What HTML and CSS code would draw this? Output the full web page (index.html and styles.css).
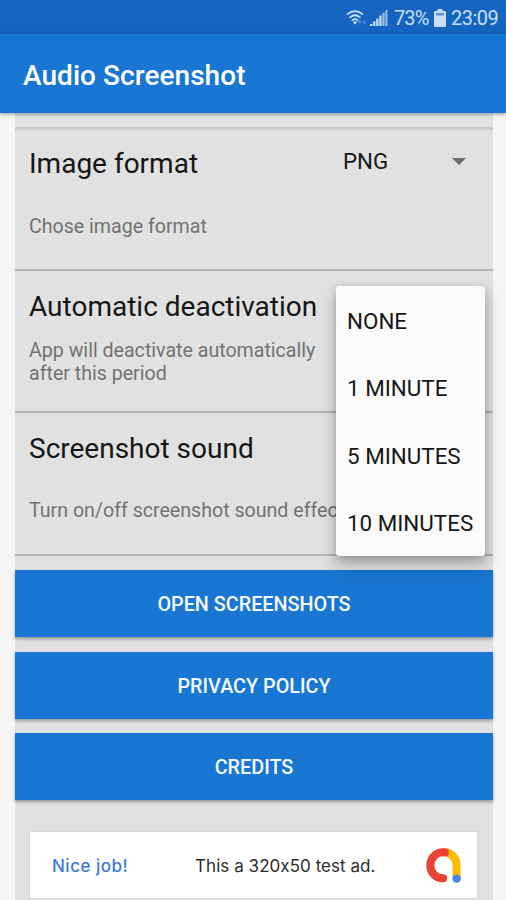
FILE: index.html
```html
<!DOCTYPE html>
<html lang="en">
<head>
<meta charset="utf-8">
<title>Audio Screenshot</title>
<link rel="stylesheet" href="styles.css">
</head>
<body>
<div class="screen">
  <div class="status">
    <svg class="wifi" viewBox="0 0 22 18" width="22" height="18" fill="none" stroke="currentColor" stroke-width="1.7" stroke-linecap="round">
      <path d="M1.5 5.2Q9 -.9 16.5 5.2M4 8.3Q9 4.2 14 8.3M6.4 11.2Q9 9.1 11.6 11.2"/>
      <path d="M6.9 12.9Q9 11.5 11.1 12.9L9 15.5z" fill="currentColor" stroke="none"/>
      <path d="M13.8 15V12M12.5 13.3l1.3-1.4 1.3 1.4M18.5 11.5v3M17.2 13.4l1.3 1.4 1.3-1.4" stroke-width="1" opacity=".35"/>
    </svg>
    <svg class="signal" viewBox="0 0 18 18" width="18" height="18" fill="currentColor">
      <path d="M0 15h2.3v2H0zM3.1 12.5h2.3V17H3.1zM6.2 9.5h2.3V17H6.2zM9.3 6.5h2.3V17H9.3z"/>
      <path d="M12.4 3.7h2.2V17h-2.2zM15.4 1h2v16h-2z" opacity=".75"/>
    </svg>
    <span class="percent">73%</span>
    <svg class="battery" viewBox="0 0 12 18" width="12" height="18">
      <path d="M3.5 0h5v2H11q1 0 1 1v14q0 1-1 1H1q-1 0-1-1V3q0-1 1-1h2.5z" fill="currentColor"/>
      <path d="M2 4h8v2.5H2z" fill="#5a93da"/>
    </svg>
    <span class="clock">23:09</span>
  </div>
  <header class="appbar"><h1>Audio Screenshot</h1></header>
  <main class="panel">
    <section class="row">
      <div>
        <h2>Image format</h2>
        <p>Chose image format</p>
      </div>
      <div class="spinner"><span>PNG</span><i class="caret"></i></div>
    </section>
    <section class="row tight">
      <div>
        <h2>Automatic deactivation</h2>
        <p>App will deactivate automatically<br>after this period</p>
      </div>
      <ul class="menu">
        <li>NONE</li>
        <li>1 MINUTE</li>
        <li>5 MINUTES</li>
        <li>10 MINUTES</li>
      </ul>
    </section>
    <section class="row">
      <div>
        <h2>Screenshot sound</h2>
        <p>Turn on/off screenshot sound effect</p>
      </div>
    </section>
    <div class="buttons">
      <button><span>OPEN SCREENSHOTS</span></button>
      <button><span>PRIVACY POLICY</span></button>
      <button><span>CREDITS</span></button>
    </div>
    <div class="ad">
      <span class="nice">Nice job!</span>
      <span class="test">This a 320x50 test ad.</span>
      <svg class="logo" viewBox="0 0 104 104" width="35" height="35" fill="none" stroke-width="24" stroke-linecap="round">
        <path d="M62 13C81 20 91 34 91 54V90" stroke="#fbbc04"/>
        <path d="M56 13C32 10 13 28 13 52C13 75 31 91 51 90" stroke="#ea4335"/>
        <circle cx="91" cy="91" r="12.5" fill="#4285f4"/>
      </svg>
    </div>
  </main>
</div>
</body>
</html>
```

FILE: styles.css
```css
* { box-sizing: border-box; margin: 0; padding: 0; }
body { background: #f5f5f5; font-family: Roboto, "Liberation Sans", sans-serif; }
.screen { width: 506px; height: 900px; overflow: hidden; display: flex; flex-direction: column; }
.status {
  height: 34px; flex: none; background: #1565c0; color: #c8e0fa;
  display: flex; align-items: center; padding: 2px 8px 0 0; justify-content: flex-end;
  font-size: 20px; line-height: 34px;
}
.wifi { margin-right: 2px; }
.signal { margin-right: 6px; }
.percent { width: 34px; margin-right: 6px; letter-spacing: -.9px; white-space: nowrap; }
.battery { margin-right: 5px; }
.clock { width: 47px; letter-spacing: -.5px; white-space: nowrap; }
.appbar {
  height: 79px; flex: none; background: #1976d2; color: #fff; padding-left: 23px;
  display: flex; align-items: center; position: relative; z-index: 1;
  box-shadow: 0 1px 4px rgba(0, 0, 0, .4);
}
h1 { font-size: 28px; font-weight: 500; line-height: 32px; padding-top: 5px; letter-spacing: .05px; }
.panel { width: 478px; margin-left: 15px; flex: 1; background: #e1e1e1; padding-top: 14px; }
.row {
  height: 142px; border-bottom: 2px solid #b5b5b5; padding: 20px 27px 0 14px;
  display: flex; justify-content: space-between; position: relative; white-space: nowrap;
}
.row:first-child { height: 144px; border-top: 3px solid #cacaca; padding-top: 18px; }
.row:first-child p { margin-top: 35px; }
.row:nth-child(3) { height: 143px; }
.row h2 { font-size: 28px; font-weight: 400; line-height: 32px; color: #161616; }
.row p { font-size: 19.6px; line-height: 23px; color: #737373; margin-top: 34px; }
.row.tight p { margin-top: 16px; }
.spinner { width: 123px; height: 26px; display: flex; justify-content: space-between; align-items: center; font-size: 22.3px; color: #161616; }
.caret { border: 7px solid transparent; border-top-color: #6d6d6d; border-bottom: 0; }
.menu {
  position: absolute; left: 321px; top: 15px; width: 149px; height: 270px; z-index: 2;
  list-style: none; background: #fafafa; border-radius: 3px; color: #161616;
  display: grid; grid-template-rows: repeat(4, 67.5px); align-items: center;
  padding: 1px 0 0 11px; font-size: 22.4px;
  box-shadow: 0 10px 20px rgba(0, 0, 0, .22), 0 3px 8px rgba(0, 0, 0, .2);
}
.buttons { padding-top: 14px; display: grid; grid-template-rows: repeat(3, 67px); gap: 14.5px; }
button { border: 0; background: #1976d2; color: #f4faff; font: 500 19.8px/24px Roboto, sans-serif; box-shadow: 0 2px 3px rgba(0, 0, 0, .33); padding-top: 3px; }
.ad {
  width: 449px; height: 68px; margin: 31px 0 0 14px; background: #fff; border: 1px solid #d6d6d6;
  display: flex; align-items: center; padding: 1px 16px 0 22px; font: 17px/24px Inter, sans-serif; color: #2b2b2b; white-space: nowrap;
  font-feature-settings: "calt" 0;
}
.ad span { padding-top: 1px; }
.nice { width: 143px; color: #3c78dc; font-weight: 500; letter-spacing: .5px; }
.test { flex: 1; letter-spacing: .05px; }
```
